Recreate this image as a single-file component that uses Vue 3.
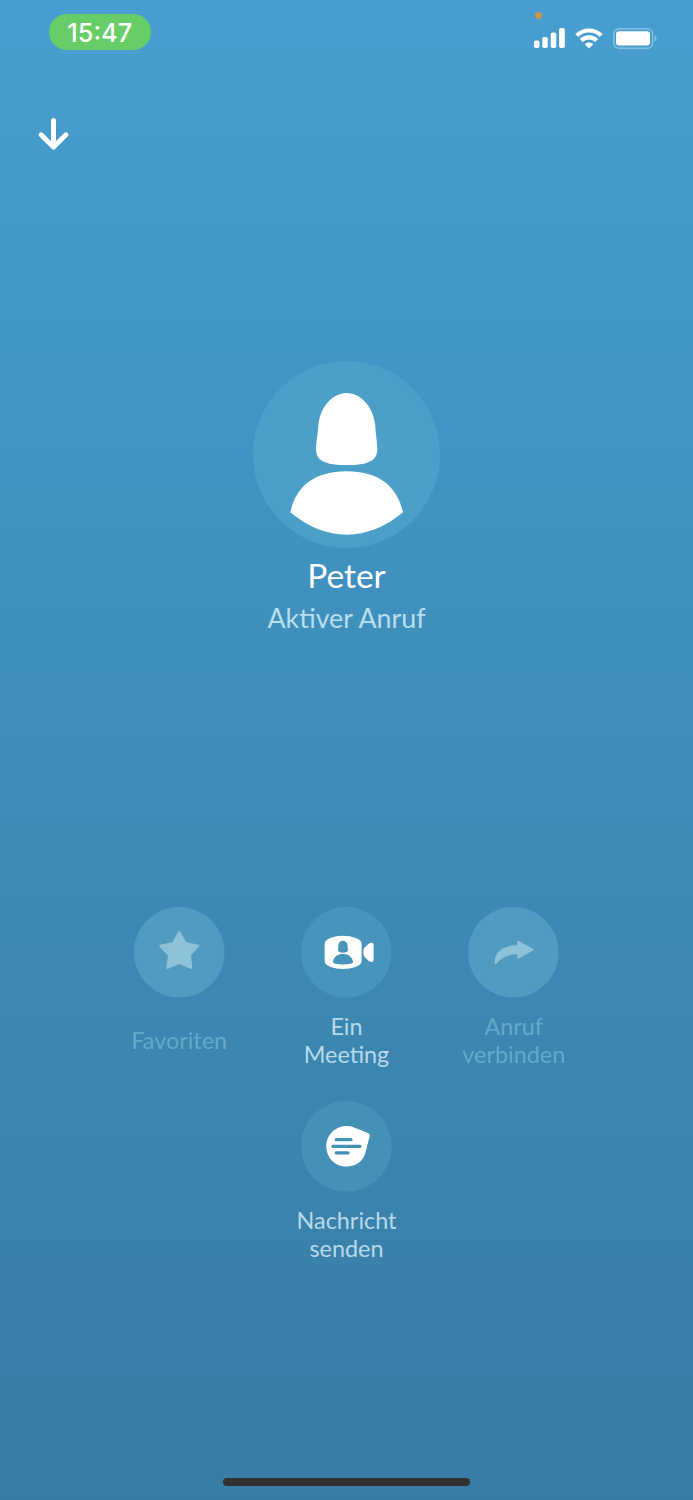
<script setup>
const actions = [
  { id: 'favorite', lines: ['Favoriten'], disabled: true },
  { id: 'meeting', lines: ['Ein', 'Meeting'], disabled: false },
  { id: 'transfer', lines: ['Anruf', 'verbinden'], disabled: true },
  { id: 'message', lines: ['Nachricht', 'senden'], disabled: false },
]
</script>

<template>
  <main class="screen">
    <header class="status">
      <div class="clock"><span>15:47</span></div>
      <div class="indicators">
        <i class="mic-dot"></i>
        <svg class="signal" width="31" height="20" viewBox="0 0 31 20" fill="#fff">
          <rect x="0" y="12.5" width="5.5" height="7.5" rx="1.8" />
          <rect x="8.3" y="9" width="5.5" height="11" rx="1.8" />
          <rect x="16.7" y="4.5" width="5.6" height="15.5" rx="1.8" />
          <rect x="25.1" y="0" width="5.7" height="20" rx="1.8" />
        </svg>
        <svg class="wifi" width="28" height="21" viewBox="0 0 28 21">
          <g fill="none" stroke="#fff" stroke-width="4.2">
            <path d="M1.7 7.5C8.5 .8 19.5 .8 26.3 7.5" />
            <path d="M6.3 12.5c4.3-4.2 11.1-4.2 15.4 0" />
          </g>
          <path d="M9.7 16.2c2.4-2.3 6.2-2.3 8.600 0L14 20.600z" fill="#fff" />
        </svg>
        <svg class="battery" width="44" height="21" viewBox="0 0 44 21">
          <rect x=".8" y=".8" width="38.8" height="19.4" rx="5.2" fill="none" stroke="#84c0e0" stroke-width="1.5" />
          <rect x="3" y="3.2" width="34" height="14.2" rx="3.2" fill="#fff" />
          <path d="M41.6 7.2c2.6 1.2 2.6 5.2 0 6.4z" fill="#84c0e0" />
        </svg>
      </div>
    </header>

    <nav class="top-nav">
      <button class="back" aria-label="Minimieren">
        <svg width="32" height="34" viewBox="0 0 32 34" fill="none" stroke="#fff" stroke-width="5" stroke-linecap="round" stroke-linejoin="round">
          <path d="M16.5 3.4v26M4.1 17.8L16.5 30l12.4-12.2" />
        </svg>
      </button>
    </nav>

    <section class="caller">
      <svg class="avatar" viewBox="0 0 561 561">
        <circle cx="280.5" cy="280.5" r="280.5" fill="#4b9fc9" />
        <g fill="#fff">
          <path d="M281 96C238 96 199 140 196 196C194 222 189 243 189 266C190 301 220 312 281 312S372 301 373 266C373 243 368 222 367 196C363 140 324 96 281 96Z" />
          <path d="M281 331C183 331 128 377 112 454Q192 521 281 521T450 454C432 377 379 331 281 331Z" />
        </g>
      </svg>
      <h1>Peter</h1>
      <p>Aktiver Anruf</p>
    </section>

    <section class="actions">
      <button v-for="a in actions" :key="a.id" class="action" :class="[a.id, { disabled: a.disabled }]">
        <svg class="disc" viewBox="0 0 272 272">
          <circle class="plate" cx="136" cy="136" r="136" />
          <path v-if="a.id === 'favorite'" class="glyph star" d="M136 76L154 109L192 117L167 144L171 182L136 167L101 182L106 144L80 117L118 109Z" />
          <g v-else-if="a.id === 'meeting'">
            <path fill="#fff" d="M90 92C109 84 143 84 163 92C176 97 182 102 182 113V159C182 170 176 175 163 180C143 188 109 188 90 180C77 175 71 170 71 159V113C71 102 77 97 90 92Z" />
            <path fill="#fff" d="M187 136C187 129 188 126 192 121L202 111C205 108 209 107 213 107C217 107 218 110 218 115V157C218 162 217 165 213 165C209 165 205 164 202 161L192 151C188 146 187 143 187 136Z" />
            <path class="cutout" d="M126 101C117 101 112 108 112 118L111 129C111 135 116 137 126 137S141 135 141 129L140 118C140 108 135 101 126 101ZM126 141C110 141 99 149 96 163C95 168 99 170 104 170.5C118 173 134 173 148 170.5C153 170 157 168 156 163C153 149 142 141 126 141Z" />
          </g>
          <path v-else-if="a.id === 'transfer'" class="glyph" d="M148 104C148 101 150 100 152 101L196 126Q199 128 196 130L152 155Q148 157 148 153V142C123 142 102 149 86 170C84 173 80 172 80 168C79 139 100 116 148 115Z" />
          <g v-else>
            <path fill="#fff" d="M137 75C103 75 76 102 76 136C76 170 102 197 136 197C165 197 186 181 193 157L206 106Q208 99 201 96L161 80C153 76 145 75 137 75Z" />
            <path class="lines" d="M106 116H150M96 136H177M106 156H141" />
          </g>
        </svg>
        <span class="label"><span v-for="line in a.lines" :key="line">{{ line }}</span></span>
      </button>
    </section>

    <div class="home-indicator"></div>
  </main>
</template>

<style>
body { margin: 0; }
</style>

<style scoped>
.screen {
  box-sizing: border-box;
  width: 693px;
  height: 1500px;
  display: flex;
  flex-direction: column;
  align-items: center;
  overflow: hidden;
  background: linear-gradient(180deg, #489ed0 0%, #4194c3 30%, #3c87b3 65%, #377da6 100%);
  font-family: Lato, "Liberation Sans", sans-serif;
  color: #fff;
}
button {
  border: 0;
  padding: 0;
  background: none;
  font: inherit;
  color: inherit;
}
svg { display: block; overflow: visible; }
.status {
  box-sizing: border-box;
  width: 100%;
  height: 62px;
  flex: none;
  display: flex;
  justify-content: space-between;
  align-items: flex-start;
  padding: 13.5px 36px 0 49px;
}
.clock {
  width: 101.5px;
  height: 36.5px;
  border-radius: 18.25px;
  background: #67ce67;
  display: flex;
  align-items: center;
  justify-content: center;
  font: 500 25.3px/37px Inter, sans-serif;
}
.clock span { padding-top: 1px; }
.indicators {
  position: relative;
  display: flex;
  margin-top: 14px;
}
.wifi { margin-left: 10px; }
.battery { margin-left: 10px; }
.mic-dot {
  position: absolute;
  left: 1px;
  top: -16px;
  width: 7px;
  height: 7px;
  border-radius: 50%;
  background: #c89742;
}
.top-nav {
  width: 100%;
  flex: none;
  height: 298.5px;
}
.back { margin: 55px 0 0 37px; display: block; }
.caller {
  flex: none;
  display: flex;
  flex-direction: column;
  align-items: center;
  height: 546.5px;
}
.avatar { width: 187px; height: 187px; flex: none; }
h1 {
  margin: 6.5px 0 0;
  font-size: 33.5px;
  line-height: 42px;
  font-weight: 400;
}
.caller p {
  margin: 4.5px 0 0;
  font-size: 26.8px;
  line-height: 34px;
  color: #b8deee;
}
.actions {
  width: 502px;
  flex: none;
  display: flex;
  flex-wrap: wrap;
  justify-content: center;
  row-gap: 32px;
}
.action {
  width: 167.3px;
  height: 162px;
  display: flex;
  flex-direction: column;
  align-items: center;
}
.disc { width: 90.6px; height: 90.6px; flex: none; }
.plate { fill: #4795bc; }
.message .plate { fill: #4590b6; }
.disabled .plate { fill: #529bc0; }
.glyph {
  fill: #8dc1d8;
}
.star {
  stroke: #8dc1d8;
  stroke-width: 8;
  stroke-linejoin: round;
}
.cutout { fill: #4795bc; }
.lines {
  fill: none;
  stroke: #4590b6;
  stroke-width: 10;
  stroke-linecap: round;
}
.label {
  height: 56px;
  margin-top: 14px;
  display: flex;
  flex-direction: column;
  justify-content: center;
  text-align: center;
  font-size: 23.4px;
  line-height: 28px;
  color: #b8d9e8;
}
.disabled .label { color: #64a9c9; }
.home-indicator {
  width: 247.5px;
  height: 8px;
  flex: none;
  margin-top: 215px;
  border-radius: 4px;
  background: #323232;
}
</style>
